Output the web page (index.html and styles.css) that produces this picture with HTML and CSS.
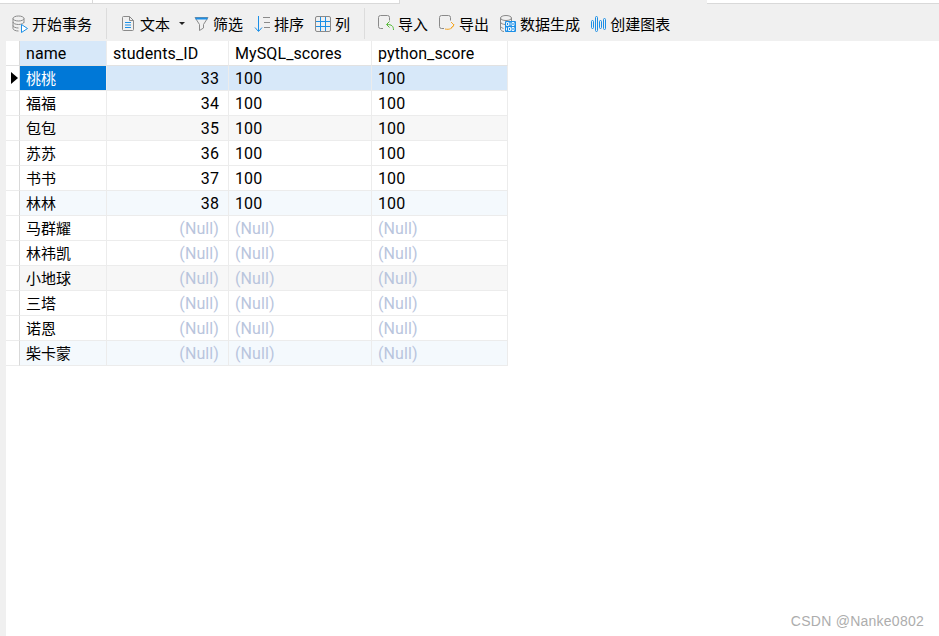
FILE: index.html
```html
<!DOCTYPE html>
<html lang="zh-CN">
<head>
<meta charset="utf-8">
<title>students</title>
<link rel="stylesheet" href="styles.css">
</head>
<body>
<div class="tabstrip">
  <div class="tab tab-a"></div>
  <div class="tab tab-b"></div>
  <div class="tab tab-active"></div>
  <div class="tab tab-rest"></div>
</div>
<div class="toolbar">
  <div class="tool tool-begin">
    <svg class="ic" width="16" height="18" viewBox="0 0 16 18" fill="none"><ellipse cx="6.5" cy="3.5" rx="5.5" ry="2.5" stroke="#8a8a8a"/><path d="M1 3.5v10c0 1.4 2.5 2.5 5.5 2.5M12 3.500v4M1 7c0 1.400 2.500 2.500 5.500 2.500S12 8.400 12 7M1 10.500c0 1.400 2.500 2.500 5.500 2.500" stroke="#8a8a8a"/><path d="M9.500 9.500l6 4-6 4z" fill="#fff" stroke="#1c8fe6"/></svg>
    <span>开始事务</span>
  </div>
  <div class="sep"></div>
  <div class="tool tool-text">
    <svg class="ic" width="14" height="17" viewBox="0 0 14 17" fill="none"><path d="M1.500 2.500a1 1 0 0 1 1-1h6l4 4v9a1 1 0 0 1-1 1h-9a1 1 0 0 1-1-1z" stroke="#8a8a8a"/><path d="M8.500 1.500v4h4" stroke="#8a8a8a"/><path d="M4 7.500h6M4 10h6M4 12.500h6" stroke="#1c8fe6"/></svg>
    <span>文本</span>
    <i class="caret"></i>
  </div>
  <div class="tool">
    <svg class="ic" width="15" height="16" viewBox="0 0 15 16" fill="none"><path d="M1 1.500h13M1 1.500l4.500 7v6l4-2.500v-3.500l4.500-7" stroke="#8a8a8a"/><path d="M1.500 2.500h12" stroke="#1c8fe6" stroke-width="2"/></svg>
    <span>筛选</span>
  </div>
  <div class="tool">
    <svg class="ic" width="16" height="18" viewBox="0 0 16 18" fill="none"><path d="M4.500 1v15M1 12.500l3.500 4 3.500-4" stroke="#1c8fe6"/><path d="M9 2.500h7M10 7.500h6M10 12.500h6" stroke="#8a8a8a"/></svg>
    <span>排序</span>
  </div>
  <div class="tool">
    <svg class="ic" width="16" height="16" viewBox="0 0 16 16" fill="none"><rect x="0.500" y="0.500" width="15" height="15" rx="1.500" stroke="#8a8a8a"/><path d="M5.500 1v14M10.500 1v14M1 5.500h14M1 10.500h14" stroke="#1c8fe6"/></svg>
    <span>列</span>
  </div>
  <div class="sep sep-2"></div>
  <div class="tool">
    <svg class="ic" width="16" height="17" viewBox="0 0 16 17" fill="none"><path d="M5 13.500H2.500a2 2 0 0 1-2-2v-9a2 2 0 0 1 2-2h7a2 2 0 0 1 2 2v3" stroke="#8a8a8a"/><path d="M15.500 15c0-4-2-5.500-6.500-5.500M11.500 6.500L8.500 9.500l3 3" stroke="#55b937"/></svg>
    <span>导入</span>
  </div>
  <div class="tool">
    <svg class="ic" width="16" height="17" viewBox="0 0 16 17" fill="none"><path d="M5 13.500H2.500a2 2 0 0 1-2-2v-9a2 2 0 0 1 2-2h7a2 2 0 0 1 2 2v3" stroke="#8a8a8a"/><path d="M6 14c4.500 1 7.500-.5 9-4.500M12 7l3 3-3 3" stroke="#f5a623"/></svg>
    <span>导出</span>
  </div>
  <div class="tool">
    <svg class="ic" width="16" height="17" viewBox="0 0 16 17" fill="none"><ellipse cx="6" cy="3" rx="5.500" ry="2.500" stroke="#8a8a8a"/><path d="M.5 3v11c0 1.400 2 2.500 3.500 2.500M11.500 3v3M.5 7c0 1.400 2.500 2.500 5 2.500M.5 11c0 1.200 1.500 2 3 2.400" stroke="#8a8a8a"/><rect x="5" y="6" width="11" height="11" rx="1" fill="#1c8fe6"/><path d="M6.500 7.500h2v3h-2zM10 7.500v3M12 7.500h2v3h-2zM6.500 12.500v3M8.500 12.500h2v3h-2zM12 12.500h2v3h-2z" stroke="#fff" stroke-width="0.900"/></svg>
    <span>数据生成</span>
  </div>
  <div class="tool">
    <svg class="ic" width="15" height="16" viewBox="0 0 15 16" fill="none"><g stroke="#1c8fe6"><rect x="0.500" y="4.500" width="2" height="8" rx="1"/><rect x="4.500" y="0.500" width="2" height="15" rx="1"/><rect x="8.500" y="4.500" width="2" height="8" rx="1"/><rect x="12.500" y="2.500" width="2" height="11" rx="1"/></g></svg>
    <span>创建图表</span>
  </div>
</div>
<div class="content">
  <table class="grid">
    <colgroup>
      <col class="c-ind"><col class="c-name"><col class="c-id"><col class="c-my"><col class="c-py">
    </colgroup>
    <thead>
      <tr>
        <th class="ind"></th>
        <th class="hl">name</th>
        <th>students_ID</th>
        <th>MySQL_scores</th>
        <th>python_score</th>
      </tr>
    </thead>
    <tbody>
      <tr class="sel">
        <td class="ind"><i class="arrow"></i></td>
        <td class="cur cjk">桃桃</td><td class="n">33</td><td>100</td><td>100</td>
      </tr>
      <tr><td class="ind"></td><td class="cjk">福福</td><td class="n">34</td><td>100</td><td>100</td></tr>
      <tr class="gray"><td class="ind"></td><td class="cjk">包包</td><td class="n">35</td><td>100</td><td>100</td></tr>
      <tr><td class="ind"></td><td class="cjk">苏苏</td><td class="n">36</td><td>100</td><td>100</td></tr>
      <tr><td class="ind"></td><td class="cjk">书书</td><td class="n">37</td><td>100</td><td>100</td></tr>
      <tr class="blue"><td class="ind"></td><td class="cjk">林林</td><td class="n">38</td><td>100</td><td>100</td></tr>
      <tr><td class="ind"></td><td class="cjk">马群耀</td><td class="n nul">(Null)</td><td class="nul">(Null)</td><td class="nul">(Null)</td></tr>
      <tr><td class="ind"></td><td class="cjk">林祎凯</td><td class="n nul">(Null)</td><td class="nul">(Null)</td><td class="nul">(Null)</td></tr>
      <tr class="gray"><td class="ind"></td><td class="cjk">小地球</td><td class="n nul">(Null)</td><td class="nul">(Null)</td><td class="nul">(Null)</td></tr>
      <tr><td class="ind"></td><td class="cjk">三塔</td><td class="n nul">(Null)</td><td class="nul">(Null)</td><td class="nul">(Null)</td></tr>
      <tr><td class="ind"></td><td class="cjk">诺恩</td><td class="n nul">(Null)</td><td class="nul">(Null)</td><td class="nul">(Null)</td></tr>
      <tr class="blue"><td class="ind"></td><td class="cjk">柴卡蒙</td><td class="n nul">(Null)</td><td class="nul">(Null)</td><td class="nul">(Null)</td></tr>
    </tbody>
  </table>
</div>
<div class="watermark">CSDN @Nanke0802</div>
</body>
</html>
```
FILE: styles.css
```css
* { box-sizing: border-box; }
html, body { height: 100%; }
body {
  margin: 0;
  background: #fff;
  display: flex;
  flex-direction: column;
  overflow: hidden;
  font-family: "Roboto", "Noto Sans CJK SC", sans-serif;
  font-size: 16px;
  color: #000;
}
.tabstrip { display: flex; height: 4px; flex: none; background: #f0f0f0; }
.tab { height: 4px; background: #fff; border-bottom: 1px solid #d9d9d9; }
.tab-a { width: 93px; border-right: 1px solid #d9d9d9; }
.tab-b { width: 307px; border-right: 1px solid #d9d9d9; }
.tab-active { width: 307px; background: #f0f0f0; border-bottom: 0; }
.tab-rest { flex: 1; }
.toolbar {
  flex: none;
  height: 37px;
  background: #f0f0f0;
  display: flex;
  align-items: center;
  padding: 2px 0 0 12px;
  gap: 11px;
  line-height: 20px;
  font-family: "Noto Sans CJK SC", sans-serif;
  font-size: 15px;
  color: #000;
}
.tool { display: flex; align-items: center; gap: 4px; white-space: nowrap; }
.tool-text { gap: 5px; }
.ic { flex: none; display: block; }
.caret {
  width: 0; height: 0;
  margin: 0 -2px 0 4px;
  border-left: 3px solid transparent;
  border-right: 3px solid transparent;
  border-top: 3px solid #222;
}
.sep { width: 1px; height: 31px; background: #dcdcdc; margin: 0 3px; }
.sep-2 { margin: 0 2px 0 3px; }
.content { flex: 1; background: #fff; border-left: 6px solid #f0f0f0; }
.grid { border-collapse: separate; border-spacing: 0; table-layout: fixed; width: 502px; }
.c-ind { width: 14px; }
.c-name { width: 87px; }
.c-id { width: 122px; }
.c-my { width: 143px; }
.c-py { width: 136px; }
th, td {
  height: 25px;
  padding: 2px 6px 0;
  font-weight: 400;
  font-size: 16px;
  line-height: 20px;
  letter-spacing: 0.1px;
  text-align: left;
  white-space: nowrap;
  border-right: 1px solid #ececec;
  border-bottom: 1px solid #ececec;
}
th { border-bottom-color: #e2e2e2; }
td.cjk { font-family: "Noto Sans CJK SC", sans-serif; font-size: 15px; letter-spacing: 0; padding-top: 0; }
.ind { padding: 0; position: relative; border-right-color: #d9d9d9; background: #fff; }
.hl { background: #d7e8f9; }
.n { text-align: right; padding-right: 9px; }
.nul { color: #b9c5dd; }
.sel td { background: #d7e8f9; }
.sel .ind { background: #fff; }
.sel .cur { background: #0078d7; color: #fff; }
.gray td { background: #f7f7f7; }
.blue td { background: #f4f9fd; }
.gray .ind, .blue .ind { background: #fff; }
.arrow {
  position: absolute;
  left: 5px;
  top: 6px;
  width: 0; height: 0;
  border-top: 6px solid transparent;
  border-bottom: 6px solid transparent;
  border-left: 7px solid #000;
}
.watermark {
  position: absolute;
  right: 15px;
  top: 612px;
  font-family: "Liberation Sans", sans-serif;
  font-size: 14px;
  line-height: 18px;
  letter-spacing: 0.25px;
  color: #adadad;
}
```
